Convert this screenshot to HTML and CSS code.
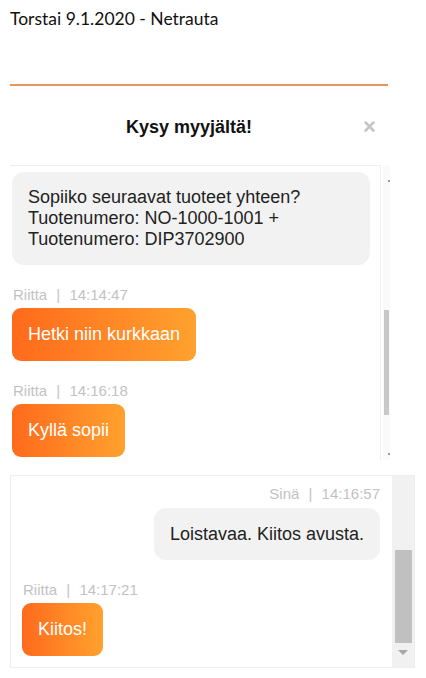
FILE: index.html
```html
<!DOCTYPE html>
<html lang="fi">
<head>
    <meta charset="UTF-8">
    <meta name="viewport" content="width=device-width, initial-scale=1.0">
    <title>Kysy myyjältä</title>
    <link rel="stylesheet" href="styles.css">
</head>
<body>
    <p class="page-title">Torstai 9.1.2020 - Netrauta</p>
    <div class="divider"></div>

    <div class="chat-head">
        <h2>Kysy myyjältä!</h2>
        <span class="close">&times;</span>
    </div>

    <div class="panel panel-top">
        <div class="messages">
            <div class="bubble grey">Sopiiko seuraavat tuoteet yhteen?<br>Tuotenumero: NO-1000-1001 +<br>Tuotenumero: DIP3702900</div>

            <div class="meta">Riitta <span class="sep">|</span> 14:14:47</div>
            <div class="bubble orange">Hetki niin kurkkaan</div>

            <div class="meta">Riitta <span class="sep">|</span> 14:16:18</div>
            <div class="bubble orange">Kyllä sopii</div>
        </div>
        <div class="scroll thin">
            <span class="dot"></span>
            <div class="thumb"></div>
            <span class="dot"></span>
        </div>
    </div>

    <div class="panel panel-bottom">
        <div class="messages">
            <div class="meta mine">Sinä <span class="sep">|</span> 14:16:57</div>
            <div class="bubble grey mine">Loistavaa. Kiitos avusta.</div>

            <div class="meta">Riitta <span class="sep">|</span> 14:17:21</div>
            <div class="bubble orange">Kiitos!</div>
        </div>
        <div class="scroll wide">
            <div class="thumb"></div>
            <span class="arrow"></span>
        </div>
    </div>
</body>
</html>
```

FILE: styles.css
```css
body {
    margin: 0;
    width: 426px;
    height: 678px;
    background: #fff;
    font-family: "Liberation Sans", Arial, sans-serif;
    color: #222;
    overflow: hidden;
}
.page-title {
    margin: 0;
    padding: 9px 0 0 10px;
    font-family: Lato, "Open Sans", sans-serif;
    font-size: 17.5px;
    line-height: 20px;
    color: #111;
}
.divider {
    margin: 55px 0 0 10px;
    width: 378px;
    height: 2px;
    background: #e8955a;
    box-shadow: 0 2px 4px rgba(232, 149, 90, 0.08);
}
.chat-head {
    display: flex;
    align-items: center;
    justify-content: center;
    width: 358px;
    margin-left: 10px;
    height: 26px;
    margin-top: 28px;
    position: relative;
}
.chat-head h2 {
    margin: 0;
    font-size: 18px;
    font-weight: bold;
    color: #111;
}
.close {
    position: absolute;
    left: 353px;
    top: 2px;
    font-size: 22px;
    line-height: 22px;
    font-weight: bold;
    color: #c4c4c4;
}
.panel {
    display: flex;
    margin-left: 10px;
}
.panel-top {
    margin-top: 25px;
    width: 380px;
    height: 295px;
    overflow: hidden;
}
.panel-top .messages {
    width: 358px;
    padding: 6px 10px 0 2px;
    border-top: 1px solid #eee;
    border-right: 1px solid #eee;
}
.panel-bottom {
    margin-top: 15px;
    width: 403px;
    height: 191px;
    border: 1px solid #eee;
}
.panel-bottom .messages {
    flex: 1;
    padding: 9px 12px 0 11px;
}
.messages {
    display: flex;
    flex-direction: column;
    align-items: flex-start;
}
.bubble {
    font-size: 18px;
    line-height: 21px;
    padding: 16px;
}
.bubble.grey {
    background: #f2f2f2;
    color: #222;
    align-self: stretch;
    padding: 15px 16px;
    border-radius: 12px;
}
.bubble.grey.mine {
    align-self: flex-end;
    padding: 16px 16px 15px;
}
.bubble.orange {
    color: #fff;
    background: linear-gradient(90deg, #ff6a1c, #ffa12e);
    border-radius: 9px;
}
.meta {
    margin: 21px 0 4px 1px;
    font-size: 15px;
    line-height: 18px;
    color: #c2c2c2;
}
.meta.mine {
    margin: 0 0 5px;
    align-self: flex-end;
}
.sep {
    margin: 0 5px;
}
.scroll {
    display: flex;
    flex-direction: column;
    align-items: center;
}
.scroll.thin {
    width: 7px;
    margin-left: 2px;
    background: #fafafa;
}
.scroll.thin .thumb {
    width: 5px;
    height: 105px;
    background: #c8c8c8;
    margin-top: 128px;
}
.dot {
    width: 2px;
    height: 2px;
    background: #999;
    margin-top: 15px;
    align-self: flex-end;
}
.scroll.thin .dot:last-child {
    margin-top: 38px;
}
.scroll.wide {
    width: 22px;
    background: #f1f1f1;
    justify-content: flex-end;
}
.scroll.wide .thumb {
    width: 17px;
    height: 93px;
    background: #c0c0c0;
}
.arrow {
    margin: 7px 0 12px;
    width: 0;
    height: 0;
    border-left: 5px solid transparent;
    border-right: 5px solid transparent;
    border-top: 5px solid #a8a8a8;
}
```
